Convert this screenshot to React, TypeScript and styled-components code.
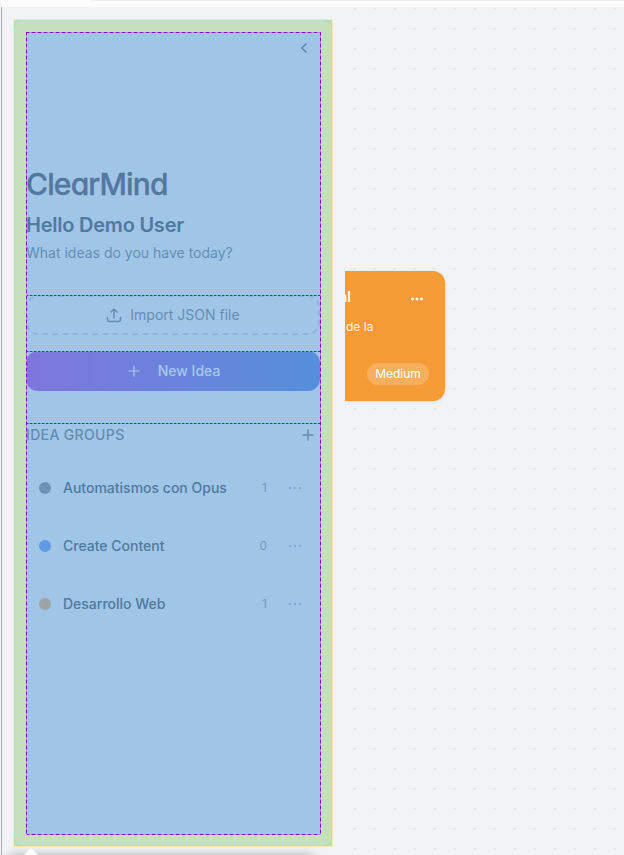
import React from "react";
import styled, { createGlobalStyle } from "styled-components";

const Global = createGlobalStyle`
  * { box-sizing: border-box; }
  body { margin: 0; background: #f2f3f5; font-family: Inter, sans-serif; overflow: hidden; }
`;

const Page = styled.div`
  width: 624px;
  height: 855px;
  border-left: 1px solid #f6f6f7;
  display: flex;
  flex-direction: column;
  overflow: hidden;
`;

const TopBar = styled.div`
  height: 7px;
  flex: none;
  display: flex;
  justify-content: flex-end;
  background: #fcfcfc;
`;

const TopTrack = styled.div`
  width: 533px;
  height: 1px;
  background: #efefef;
`;

const Workspace = styled.div`
  flex: 1;
  display: flex;
  border-left: 1px solid #a9abae;
  padding-left: 11px;
`;

const Sidebar = styled.aside`
  position: relative;
  width: 320px;
  height: 828px;
  margin: 12px 12px 0 0;
  flex: none;
  padding: 12px;
  border: 1px solid #fbe9bf;
  background: #c5e0bb;
`;

const Corner = styled.i<{ $right?: boolean; $bottom?: boolean }>`
  position: absolute;
  width: 12px;
  height: 12px;
  ${(p) => (p.$right ? "right: 0;" : "left: 0;")}
  ${(p) => (p.$bottom ? "bottom: 0;" : "top: 0;")}
  background: radial-gradient(
    circle at ${(p) => (p.$right ? "0" : "100%")} ${(p) => (p.$bottom ? "0" : "100%")},
    transparent 11.5px,
    #bfdbb7 12.5px
  );
`;

const Content = styled.div`
  position: relative;
  width: 294px;
  height: 802px;
  background: #a1c5e7;
  display: flex;
  flex-direction: column;
`;

const Guide = styled.i<{ $vertical?: boolean; $fine?: boolean; $at: number }>`
  position: absolute;
  z-index: 1;
  ${(p) =>
    p.$vertical
      ? `left: ${p.$at}px; top: 0; width: 1px; height: 803px;`
      : `top: ${p.$at}px; left: 0; height: 1px; width: 295px;`}
  background: repeating-linear-gradient(
    ${(p) => (p.$vertical ? "180deg" : "90deg")},
    ${(p) =>
      p.$fine
        ? "#7f0cc8 0 2px, #9a6fdb 2px 3px, #a9a0e0 3px 4px"
        : "#7d00c4 0 3px, #a070e0 3px 4px, #b7a5d8 4px 5px, #a070e0 5px 6px"}
  );
`;

const CollapseRow = styled.div`
  height: 32px;
  display: flex;
  justify-content: flex-end;
  align-items: center;
  padding-right: 8px;
  color: #5d86ae;
`;

const Logo = styled.div`
  margin-top: 102px;
  height: 36px;
  line-height: 37px;
  font-size: 30px;
  font-weight: 500;
  letter-spacing: -0.85px;
  font-feature-settings: "cv11", "ss03";
  -webkit-text-stroke: 0.3px #53779f;
  color: #53779f;
  white-space: nowrap;
`;

const Greeting = styled.h1`
  margin: 9px 0 0;
  font-size: 20px;
  line-height: 28px;
  font-weight: 600;
  letter-spacing: -0.23px;
  color: #50799f;
`;

const Question = styled.p`
  margin: 4px 0 0;
  font-size: 14px;
  line-height: 20px;
  color: #668eb4;
`;

const ImportButton = styled.button`
  position: relative;
  margin: 32px 0 0;
  padding: 0 0 1px;
  height: 40px;
  flex: none;
  border: 0;
  background: none;
  display: flex;
  align-items: center;
  justify-content: center;
  gap: 8px;
  font: 400 14px/18px Inter, sans-serif;
  color: #668eb4;
`;

const Outline = styled.svg`
  position: absolute;
  inset: 0;
`;

const NewButton = styled(ImportButton)`
  margin-top: 16px;
  gap: 16px;
  border-radius: 12px;
  background: linear-gradient(90deg, #7f76db, #558fdc);
  font-weight: 500;
  color: #a6c9e9;
`;

const GroupHeader = styled.div`
  margin-top: 32px;
  height: 24px;
  display: flex;
  align-items: center;
  justify-content: space-between;
  padding-right: 4px;
  font-size: 14px;
  font-weight: 500;
  line-height: 18px;
  letter-spacing: 0.35px;
  color: #638bb1;
`;

const GroupList = styled.div`
  margin-top: 12px;
`;

const GroupRow = styled.div`
  height: 58px;
  display: flex;
  align-items: center;
  padding: 0 17px 0 13px;
`;

const Dot = styled.i<{ $color: string }>`
  width: 12px;
  height: 12px;
  border-radius: 50%;
  margin-right: 12px;
  background: ${(p) => p.$color};
`;

const GroupName = styled.span`
  flex: 1;
  font-size: 14px;
  line-height: 18px;
  font-weight: 500;
  color: #50799f;
`;

const Count = styled.span`
  font-size: 12px;
  line-height: 16px;
  color: #7199bf;
  margin-right: 20px;
`;

const Canvas = styled.main`
  flex: 1;
  overflow: hidden;
  background: radial-gradient(ellipse 1.5px 1.2px at 9.5px 2px, #e4e5e8 60%, transparent 100%) 0 0 / 20px 20px;
`;

const Card = styled.article`
  width: 100px;
  height: 130px;
  margin-top: 264px;
  padding: 16px 16px 16px 0;
  border-radius: 0 12px 12px 0;
  background: #f59b36;
  box-shadow: 0 1px 4px rgba(0, 0, 0, 0.08);
  color: #fff;
  display: flex;
  flex-direction: column;
`;

const CardTop = styled.div`
  height: 20px;
  display: flex;
  align-items: center;
  justify-content: space-between;
  padding-right: 4px;
`;

const CardTitle = styled.b`
  width: 6px;
  overflow: hidden;
  display: flex;
  justify-content: flex-end;
  padding-bottom: 1px;
  font-size: 14px;
  line-height: 18px;
  font-weight: 600;
`;

const CardText = styled.p`
  margin: 10px 0 0 1px;
  font-size: 12px;
  line-height: 20px;
  color: #fff3e4;
`;

const Priority = styled.span`
  align-self: flex-end;
  margin-top: 26px;
  width: 62px;
  height: 22px;
  border-radius: 11px;
  background: #f7af5e;
  font-size: 12px;
  line-height: 22px;
  text-align: center;
`;

const Popover = styled.div`
  position: absolute;
  left: 10px;
  top: 855px;
  width: 303px;
  height: 40px;
  background: #fff;
  box-shadow: 0 1px 10px rgba(0, 0, 0, 0.35);
  &::before {
    content: "";
    position: absolute;
    left: 13px;
    top: -7px;
    border: solid transparent;
    border-width: 0 8px 8px;
    border-bottom-color: #fff;
  }
`;

const Plus = ({ size, width = 1.2 }: { size: number; width?: number }) => (
  <svg width={size} height={size} viewBox="0 0 16 16" fill="none" stroke="currentColor" strokeWidth={width} strokeLinecap="round">
    <path d="M8 3v10M3 8h10" />
  </svg>
);

const More = ({ color }: { color: string }) => (
  <svg width="16" height="16" viewBox="0 0 16 16" fill={color}>
    <circle cx="3" cy="8" r="1.35" />
    <circle cx="8" cy="8" r="1.35" />
    <circle cx="13" cy="8" r="1.35" />
  </svg>
);

const CardMore = () => (
  <svg width="16" height="16" viewBox="0 0 16 16" fill="#fff">
    <circle cx="3.5" cy="10" r="1.5" />
    <circle cx="8" cy="10" r="1.5" />
    <circle cx="12.5" cy="10" r="1.5" />
  </svg>
);

const groups = [
  { name: "Automatismos con Opus", count: 1, color: "#6c91b4" },
  { name: "Create Content", count: 0, color: "#5f9be3" },
  { name: "Desarrollo Web", count: 1, color: "#9ca4a6" },
];

export default function App() {
  return (
    <Page>
      <Global />
      <TopBar>
        <TopTrack />
      </TopBar>
      <Workspace>
        <Sidebar>
          <Corner />
          <Corner $right />
          <Corner $bottom />
          <Corner $right $bottom />
          <Content>
            <Guide $at={0} />
            <Guide $fine $at={263} />
            <Guide $fine $at={319} />
            <Guide $fine $at={391} />
            <Guide $at={802} />
            <Guide $vertical $at={0} />
            <Guide $vertical $at={294} />
            <CollapseRow>
              <svg width="16" height="16" viewBox="0 0 16 16" fill="none" stroke="currentColor" strokeWidth="1.5">
                <path d="M10.5 3.5 5.8 8l4.7 4.5" />
              </svg>
            </CollapseRow>
            <Logo>ClearMind</Logo>
            <Greeting>Hello Demo User</Greeting>
            <Question>What ideas do you have today?</Question>
            <ImportButton>
              <Outline width="294" height="40" fill="none">
                <rect x="1" y="1" width="292" height="38" rx="11" stroke="#8fb4d9" strokeWidth="2" strokeDasharray="6 4" />
              </Outline>
              <svg width="16" height="16" viewBox="0 0 16 16" fill="none" stroke="currentColor" strokeWidth="1.5" strokeLinecap="round" strokeLinejoin="round">
                <path d="M1.5 10.500v2a2 2 0 0 0 2 2h9a2 2 0 0 0 2-2v-2M8 11V2M5 5l3-3 3 3" />
              </svg>
              Import JSON file
            </ImportButton>
            <NewButton>
              <Plus size={16} />
              New Idea
            </NewButton>
            <GroupHeader>
              IDEA GROUPS
              <Plus size={16} width={1.5} />
            </GroupHeader>
            <GroupList>
              {groups.map((g) => (
                <GroupRow key={g.name}>
                  <Dot $color={g.color} />
                  <GroupName>{g.name}</GroupName>
                  <Count>{g.count}</Count>
                  <More color="#84abd1" />
                </GroupRow>
              ))}
            </GroupList>
          </Content>
        </Sidebar>
        <Canvas>
          <Card>
            <CardTop>
              <CardTitle>al</CardTitle>
              <CardMore />
            </CardTop>
            <CardText>de la</CardText>
            <Priority>Medium</Priority>
          </Card>
        </Canvas>
      </Workspace>
      <Popover />
    </Page>
  );
}
